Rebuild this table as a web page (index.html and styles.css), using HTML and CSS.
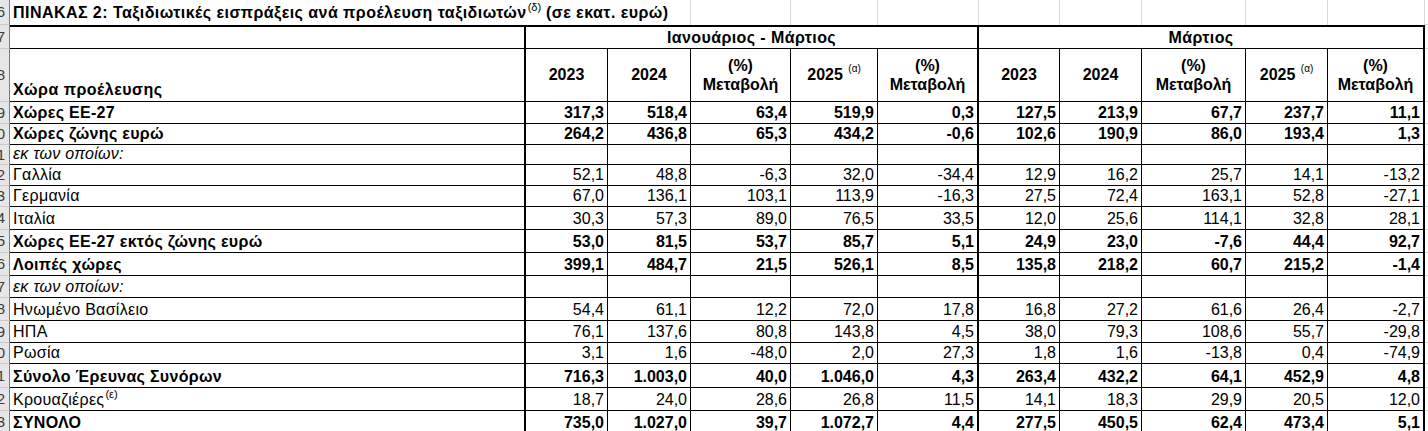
FILE: index.html
```html
<!DOCTYPE html>
<html lang="el">
<head>
<meta charset="utf-8">
<title>ΠΙΝΑΚΑΣ 2</title>
<link rel="stylesheet" href="styles.css">
</head>
<body>
<table class="sheet">
  <colgroup>
    <col class="c-rh"><col class="c-a"><col class="c-b"><col class="c-c"><col class="c-d"><col class="c-e"><col class="c-f"><col class="c-g"><col class="c-h"><col class="c-i"><col class="c-j"><col class="c-k"><col class="c-x">
  </colgroup>
  <tr class="h25">
    <td class="rh"><div class="rn">6</div></td>
    <td class="title" colspan="3">ΠΙΝΑΚΑΣ 2: Ταξιδιωτικές εισπράξεις ανά προέλευση ταξιδιωτών<sup class="fn">(δ)</sup> (σε εκατ. ευρώ)</td>
    <td class="grid"></td><td class="grid"></td><td class="grid"></td><td class="grid"></td><td class="grid"></td><td class="grid"></td><td class="grid"></td><td class="grid"></td>
    <td class="x"></td>
  </tr>
  <tr class="h24 top">
    <td class="rh"><div class="rn">7</div></td>
    <td class="lbl"></td>
    <td class="period" colspan="5">Ιανουάριος - Μάρτιος</td>
    <td class="period" colspan="5">Μάρτιος</td>
    <td class="x"></td>
  </tr>
  <tr class="h53 head">
    <td class="rh"><div class="rn">8</div></td>
    <td class="lbl b">Χώρα προέλευσης</td>
    <td class="hd">2023</td>
    <td class="hd">2024</td>
    <td class="hd">(%)<br>Μεταβολή</td>
    <td class="hd">2025 <sup class="ann">(α)</sup></td>
    <td class="hd sep">(%)<br>Μεταβολή</td>
    <td class="hd">2023</td>
    <td class="hd">2024</td>
    <td class="hd">(%)<br>Μεταβολή</td>
    <td class="hd">2025 <sup class="ann">(α)</sup></td>
    <td class="hd sep">(%)<br>Μεταβολή</td>
    <td class="x"></td>
  </tr>
  <tr class="h22 b">
    <td class="rh"><div class="rn">9</div></td>
    <td class="lbl">Χώρες ΕΕ-27</td>
    <td class="n">317,3</td><td class="n">518,4</td><td class="n">63,4</td><td class="n">519,9</td><td class="n sep">0,3</td>
    <td class="n">127,5</td><td class="n">213,9</td><td class="n">67,7</td><td class="n">237,7</td><td class="n sep">11,1</td>
    <td class="x"></td>
  </tr>
  <tr class="h21 b">
    <td class="rh"><div class="rn">10</div></td>
    <td class="lbl">Χώρες ζώνης ευρώ</td>
    <td class="n">264,2</td><td class="n">436,8</td><td class="n">65,3</td><td class="n">434,2</td><td class="n sep">-0,6</td>
    <td class="n">102,6</td><td class="n">190,9</td><td class="n">86,0</td><td class="n">193,4</td><td class="n sep">1,3</td>
    <td class="x"></td>
  </tr>
  <tr class="h19">
    <td class="rh"><div class="rn">11</div></td>
    <td class="lbl it">εκ των οποίων:</td>
    <td class="n"></td><td class="n"></td><td class="n"></td><td class="n"></td><td class="n sep"></td>
    <td class="n"></td><td class="n"></td><td class="n"></td><td class="n"></td><td class="n sep"></td>
    <td class="x"></td>
  </tr>
  <tr class="h21">
    <td class="rh"><div class="rn">12</div></td>
    <td class="lbl">Γαλλία</td>
    <td class="n">52,1</td><td class="n">48,8</td><td class="n">-6,3</td><td class="n">32,0</td><td class="n sep">-34,4</td>
    <td class="n">12,9</td><td class="n">16,2</td><td class="n">25,7</td><td class="n">14,1</td><td class="n sep">-13,2</td>
    <td class="x"></td>
  </tr>
  <tr class="h21">
    <td class="rh"><div class="rn">13</div></td>
    <td class="lbl">Γερμανία</td>
    <td class="n">67,0</td><td class="n">136,1</td><td class="n">103,1</td><td class="n">113,9</td><td class="n sep">-16,3</td>
    <td class="n">27,5</td><td class="n">72,4</td><td class="n">163,1</td><td class="n">52,8</td><td class="n sep">-27,1</td>
    <td class="x"></td>
  </tr>
  <tr class="h23">
    <td class="rh"><div class="rn">14</div></td>
    <td class="lbl">Ιταλία</td>
    <td class="n">30,3</td><td class="n">57,3</td><td class="n">89,0</td><td class="n">76,5</td><td class="n sep">33,5</td>
    <td class="n">12,0</td><td class="n">25,6</td><td class="n">114,1</td><td class="n">32,8</td><td class="n sep">28,1</td>
    <td class="x"></td>
  </tr>
  <tr class="h23 b">
    <td class="rh"><div class="rn">15</div></td>
    <td class="lbl">Χώρες ΕΕ-27 εκτός ζώνης ευρώ</td>
    <td class="n">53,0</td><td class="n">81,5</td><td class="n">53,7</td><td class="n">85,7</td><td class="n sep">5,1</td>
    <td class="n">24,9</td><td class="n">23,0</td><td class="n">-7,6</td><td class="n">44,4</td><td class="n sep">92,7</td>
    <td class="x"></td>
  </tr>
  <tr class="h23 b">
    <td class="rh"><div class="rn">16</div></td>
    <td class="lbl">Λοιπές χώρες</td>
    <td class="n">399,1</td><td class="n">484,7</td><td class="n">21,5</td><td class="n">526,1</td><td class="n sep">8,5</td>
    <td class="n">135,8</td><td class="n">218,2</td><td class="n">60,7</td><td class="n">215,2</td><td class="n sep">-1,4</td>
    <td class="x"></td>
  </tr>
  <tr class="h22">
    <td class="rh"><div class="rn">17</div></td>
    <td class="lbl it">εκ των οποίων:</td>
    <td class="n"></td><td class="n"></td><td class="n"></td><td class="n"></td><td class="n sep"></td>
    <td class="n"></td><td class="n"></td><td class="n"></td><td class="n"></td><td class="n sep"></td>
    <td class="x"></td>
  </tr>
  <tr class="h23">
    <td class="rh"><div class="rn">18</div></td>
    <td class="lbl">Ηνωμένο Βασίλειο</td>
    <td class="n">54,4</td><td class="n">61,1</td><td class="n">12,2</td><td class="n">72,0</td><td class="n sep">17,8</td>
    <td class="n">16,8</td><td class="n">27,2</td><td class="n">61,6</td><td class="n">26,4</td><td class="n sep">-2,7</td>
    <td class="x"></td>
  </tr>
  <tr class="h22">
    <td class="rh"><div class="rn">19</div></td>
    <td class="lbl">ΗΠΑ</td>
    <td class="n">76,1</td><td class="n">137,6</td><td class="n">80,8</td><td class="n">143,8</td><td class="n sep">4,5</td>
    <td class="n">38,0</td><td class="n">79,3</td><td class="n">108,6</td><td class="n">55,7</td><td class="n sep">-29,8</td>
    <td class="x"></td>
  </tr>
  <tr class="h21">
    <td class="rh"><div class="rn">20</div></td>
    <td class="lbl">Ρωσία</td>
    <td class="n">3,1</td><td class="n">1,6</td><td class="n">-48,0</td><td class="n">2,0</td><td class="n sep">27,3</td>
    <td class="n">1,8</td><td class="n">1,6</td><td class="n">-13,8</td><td class="n">0,4</td><td class="n sep">-74,9</td>
    <td class="x"></td>
  </tr>
  <tr class="h24 b">
    <td class="rh"><div class="rn">21</div></td>
    <td class="lbl">Σύνολο Έρευνας Συνόρων</td>
    <td class="n">716,3</td><td class="n">1.003,0</td><td class="n">40,0</td><td class="n">1.046,0</td><td class="n sep">4,3</td>
    <td class="n">263,4</td><td class="n">432,2</td><td class="n">64,1</td><td class="n">452,9</td><td class="n sep">4,8</td>
    <td class="x"></td>
  </tr>
  <tr class="h23">
    <td class="rh"><div class="rn">22</div></td>
    <td class="lbl">Κρουαζιέρες<sup class="fn">(ε)</sup></td>
    <td class="n">18,7</td><td class="n">24,0</td><td class="n">28,6</td><td class="n">26,8</td><td class="n sep">11,5</td>
    <td class="n">14,1</td><td class="n">18,3</td><td class="n">29,9</td><td class="n">20,5</td><td class="n sep">12,0</td>
    <td class="x"></td>
  </tr>
  <tr class="h23 b">
    <td class="rh"><div class="rn">23</div></td>
    <td class="lbl">ΣΥΝΟΛΟ</td>
    <td class="n">735,0</td><td class="n">1.027,0</td><td class="n">39,7</td><td class="n">1.072,7</td><td class="n sep">4,4</td>
    <td class="n">277,5</td><td class="n">450,5</td><td class="n">62,4</td><td class="n">473,4</td><td class="n sep">5,1</td>
    <td class="x"></td>
  </tr>
</table>
</body>
</html>
```
FILE: styles.css
```css
html, body {
  margin: 0;
  padding: 0;
  background: #ffffff;
  overflow: hidden;
}

.sheet {
  border-collapse: separate;
  border-spacing: 0;
  table-layout: fixed;
  width: 1428px;
  font-family: "Liberation Sans", Arial, sans-serif;
  font-size: 16px;
  color: #000;
}

.c-rh { width: 10px; }
.c-a { width: 516px; }
.c-b { width: 82px; }
.c-c { width: 83px; }
.c-d { width: 100px; }
.c-e { width: 87px; }
.c-f { width: 101px; }
.c-g { width: 81px; }
.c-h { width: 82px; }
.c-i { width: 104px; }
.c-j { width: 82px; }
.c-k { width: 97px; }
.c-x { width: 3px; }

.sheet td {
  box-sizing: border-box;
  padding: 0 4px 1px 2px;
  white-space: nowrap;
  overflow: hidden;
  vertical-align: bottom;
  line-height: 18px;
}

.h19 { height: 19px; }
.h21 { height: 21px; }
.h22 { height: 22px; }
.h23 { height: 23px; }
.h24 { height: 24px; }
.h25 { height: 25px; }
.h53 { height: 53px; }

.b { font-weight: bold; }
.it { font-style: italic; }

/* row header strip */
.sheet td.rh {
  padding: 0;
  background: #e6e6e6;
  border-right: 1px solid #7a7a7a;
  border-bottom: 1px solid #c9c9c9;
  vertical-align: middle;
}
.rn {
  display: flex;
  justify-content: flex-end;
  overflow: hidden;
  padding-right: 4px;
  font-size: 15px;
  font-weight: normal;
  font-style: normal;
  letter-spacing: 0;
  color: #3c3c3c;
}

/* title row */
.sheet td.title {
  font-weight: bold;
  letter-spacing: 0.45px;
  padding-left: 3px;
  padding-bottom: 3px;
  border-right: 1px solid #d6d6d6;
}
.sheet td.grid {
  border-right: 1px solid #d6d6d6;
}

.fn {
  font-size: 11px;
  font-weight: normal;
  letter-spacing: 0;
  vertical-align: 7px;
  line-height: 0;
  margin-left: 1px;
}
.ann {
  font-size: 10px;
  font-weight: normal;
  vertical-align: 8px;
  line-height: 0;
  margin-left: 1px;
}

/* period row */
.top td:not(.rh):not(.x) {
  border-top: 2px solid #000;
}
.sheet td.period {
  font-weight: bold;
  letter-spacing: 0.4px;
  text-align: center;
  vertical-align: middle;
  border-right: 2px solid #000;
  border-bottom: 1px solid #000;
  padding: 0;
}

/* label column */
.sheet td.lbl {
  padding-left: 3px;
  letter-spacing: 0.3px;
  border-right: 2px solid #000;
  border-bottom: 1px solid #000;
}
.b .lbl,
.sheet td.lbl.b {
  letter-spacing: 0.5px;
}

/* header cells */
.sheet td.hd {
  font-weight: bold;
  text-align: center;
  vertical-align: middle;
  line-height: 19px;
  padding: 0 0 1px 0;
  border-right: 1px solid #000;
  border-bottom: 1px solid #000;
}
.head .lbl {
  padding-bottom: 2px;
}

/* numeric cells */
.sheet td.n {
  text-align: right;
  padding-right: 3px;
  border-right: 1px solid #000;
  border-bottom: 1px solid #000;
}
.sheet td.sep {
  border-right: 2px solid #000;
}

.sheet td.x {
  padding: 0;
  border-bottom: 1px solid #d6d6d6;
}
```
